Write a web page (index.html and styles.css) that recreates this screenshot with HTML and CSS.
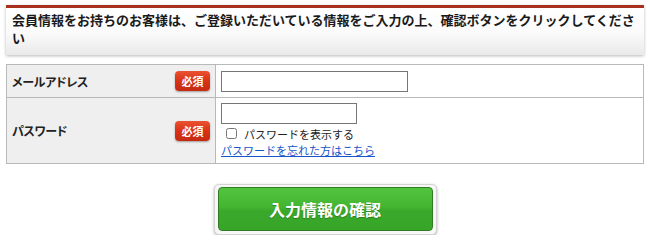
FILE: index.html
```html
<!DOCTYPE html>
<html lang="ja">
<head>
<meta charset="utf-8">
<title>ログイン</title>
<link rel="stylesheet" href="styles.css">
</head>
<body>
<div class="page">
  <div class="notice">会員情報をお持ちのお客様は、ご登録いただいている情報をご入力の上、確認ボタンをクリックしてください</div>
  <table class="form">
    <tr class="row-mail">
      <th><div class="label"><span class="name">メールアドレス</span><span class="req">必須</span></div></th>
      <td><input type="text" class="in-mail"></td>
    </tr>
    <tr class="row-pass">
      <th><div class="label"><span class="name">パスワード</span><span class="req">必須</span></div></th>
      <td>
        <input type="password" class="in-pass">
        <label class="show"><input type="checkbox"> パスワードを表示する</label>
        <a class="forgot" href="#">パスワードを忘れた方はこちら</a>
      </td>
    </tr>
  </table>
  <div class="actions">
    <div class="btn-frame"><button type="button" class="btn">入力情報の確認</button></div>
  </div>
</div>
</body>
</html>
```
FILE: styles.css
```css
html, body {
  margin: 0;
  padding: 0;
  background: #fff;
}
body {
  font-family: "Noto Sans CJK JP", "Liberation Sans", sans-serif;
  color: #222;
}
.page {
  padding: 5px 6px 0;
}
.notice {
  border-top: 3px solid #a8301f;
  background: linear-gradient(#ffffff 0%, #fafafa 55%, #e9e9e9 100%);
  box-shadow: 0 1px 3px rgba(0,0,0,0.28);
  padding: 3px 8px 8px 6px;
  font-size: 13px;
  font-weight: bold;
  line-height: 18px;
  color: #1a1a1a;
}
.form {
  margin-top: 9px;
  width: 638px;
  border-collapse: collapse;
  border: 1px solid #b9b9b9;
}
.form th, .form td {
  border: 1px solid #b9b9b9;
  padding: 5px;
  vertical-align: middle;
  text-align: left;
}
.form th {
  width: 198px;
  background: #efefef;
  font-weight: bold;
  font-size: 12px;
}
.label {
  display: flex;
  align-items: center;
  justify-content: space-between;
}
.name {
  font-feature-settings: "palt";
  letter-spacing: -0.3px;
}
.req {
  display: inline-block;
  width: 35px;
  height: 20px;
  line-height: 20px;
  text-align: center;
  border-radius: 4px;
  background: linear-gradient(#ea5232 0%, #d93216 50%, #c42a10 100%);
  box-shadow: 0 1px 2px rgba(0,0,0,0.35);
  color: #fff;
  font-size: 11px;
}
.row-mail td { height: 22px; }
.form input[type=text], .form input[type=password] {
  display: block;
  box-sizing: border-box;
  height: 21px;
  margin: 0;
  border: 1px solid #767676;
  padding: 1px 3px;
  font-size: 12px;
}
.in-mail { width: 187px; }
.in-pass { width: 136px; }
.show {
  display: flex;
  align-items: center;
  height: 17px;
  font-size: 11px;
  color: #222;
  margin-top: 1px;
}
.show input {
  margin: 0 7px 0 5px;
  width: 11px;
  height: 11px;
}
.forgot {
  display: block;
  font-size: 11px;
  line-height: 16px;
  color: #1755c8;
  text-decoration: underline;
}
.actions {
  display: flex;
  justify-content: center;
  margin-top: 20px;
}
.btn-frame {
  padding: 2px 3px 3px;
  background: #f7f7f7;
  border: 1px solid #d4d4d4;
  border-radius: 5px;
  box-shadow: 0 1px 3px rgba(0,0,0,0.3);
}
.btn {
  display: block;
  width: 215px;
  height: 44px;
  border: 1px solid #2f7d22;
  border-radius: 4px;
  background: linear-gradient(#52c43e 0%, #43b531 45%, #3aa82a 55%, #37a628 100%);
  color: #fff;
  font-family: "Noto Sans CJK JP", sans-serif;
  font-size: 16px;
  font-weight: bold;
  text-shadow: 0 1px 1px rgba(0,0,0,0.25);
  padding: 0;
}
```
